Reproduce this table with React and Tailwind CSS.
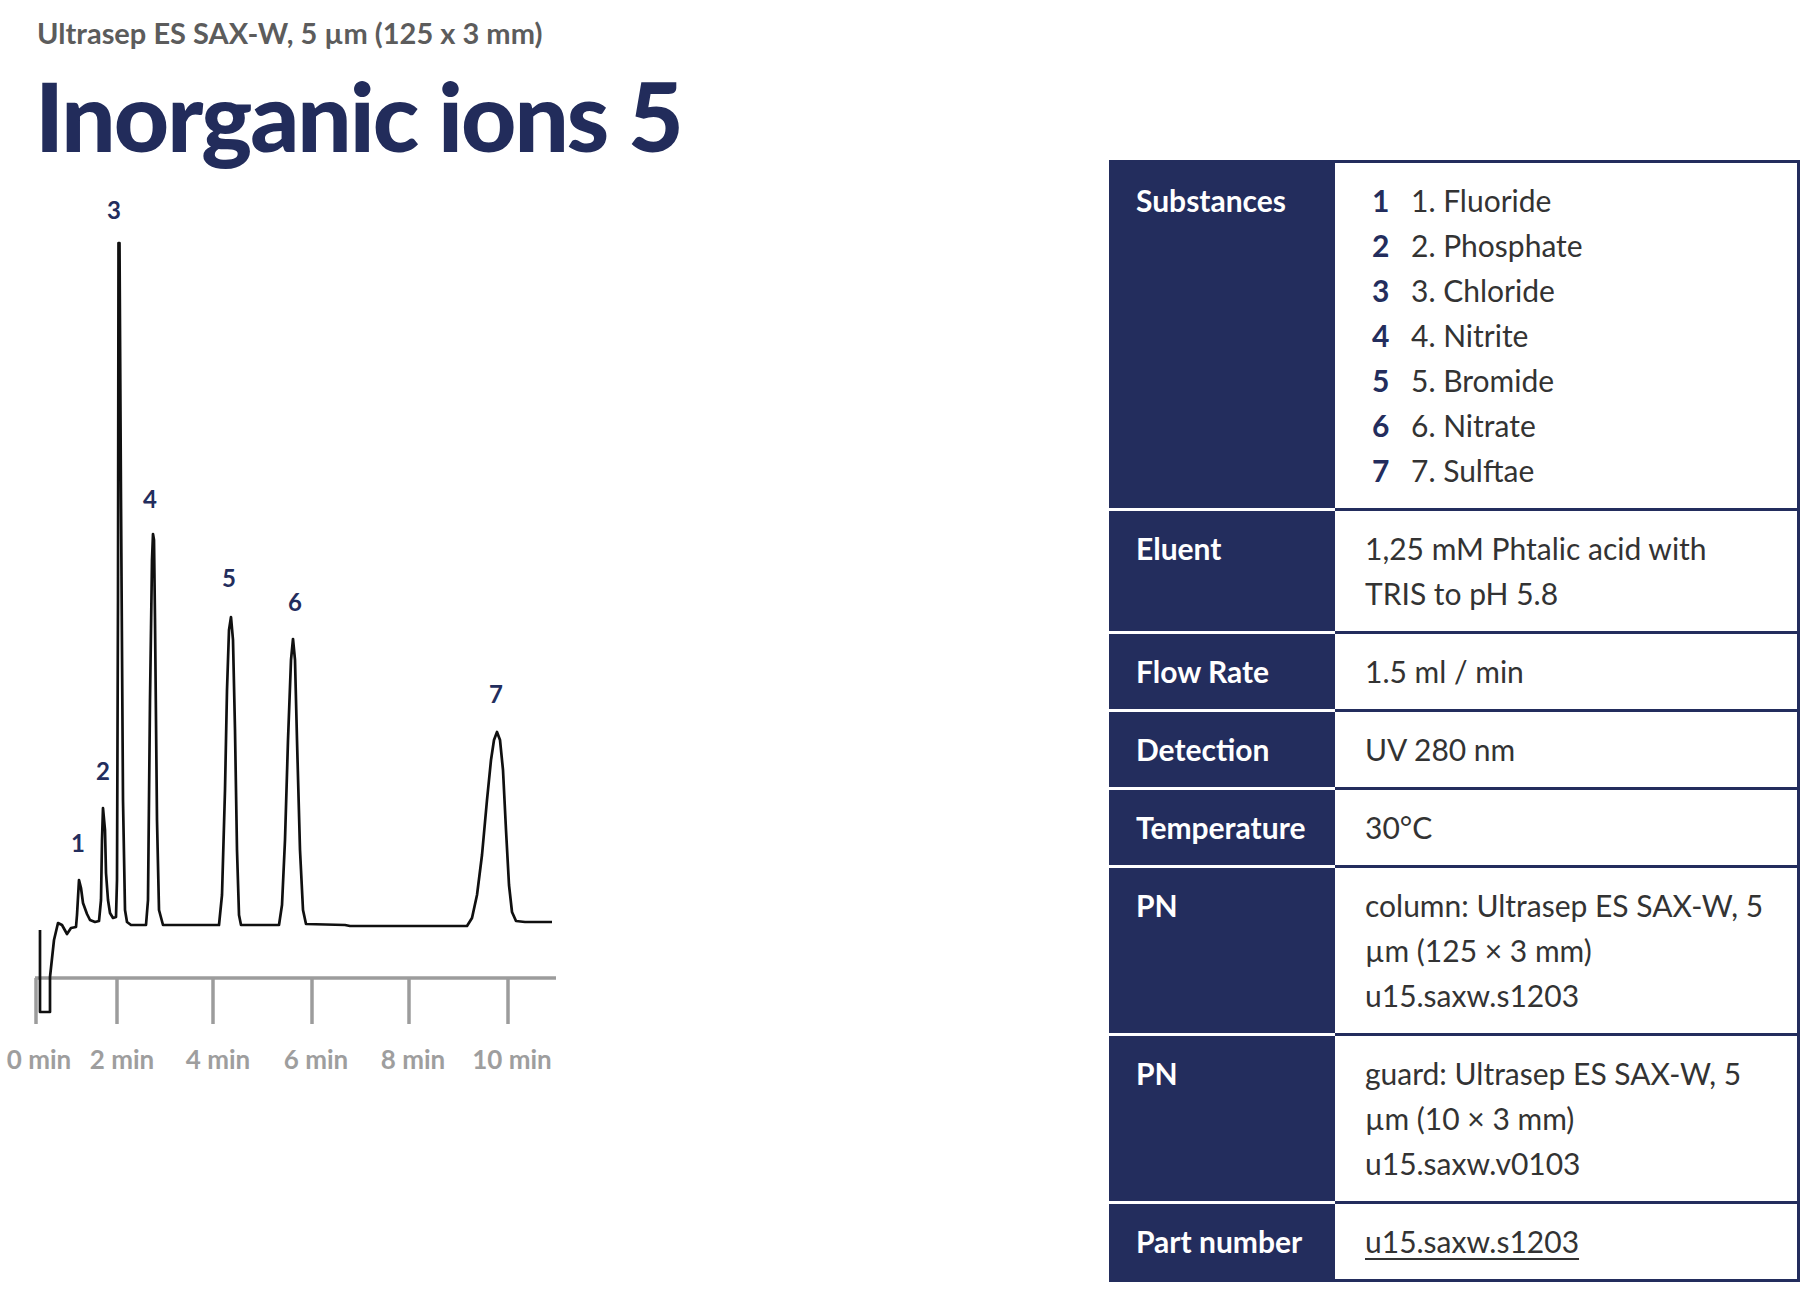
import React from 'react'

const NAVY = '#232d5d'

const substances = [
  'Fluoride',
  'Phosphate',
  'Chloride',
  'Nitrite',
  'Bromide',
  'Nitrate',
  'Sulftae',
]

const rows = [
  { label: 'Eluent', lines: ['1,25 mM Phtalic acid with', 'TRIS to pH 5.8'] },
  { label: 'Flow Rate', lines: ['1.5 ml / min'] },
  { label: 'Detection', lines: ['UV 280 nm'] },
  { label: 'Temperature', lines: ['30°C'] },
  {
    label: 'PN',
    lines: ['column: Ultrasep ES SAX-W, 5', 'µm (125 × 3 mm)', 'u15.saxw.s1203'],
  },
  {
    label: 'PN',
    lines: ['guard: Ultrasep ES SAX-W, 5', 'µm (10 × 3 mm)', 'u15.saxw.v0103'],
  },
]

const trace =
  'M40,930 L40,1012 L50,1012 L50,977 L54,940 L58,923 L62,925 L67,934 L71,928 L76,927 L77,915 L79,880 L81,888 L83,903 L87,914 L90,920 L95,922 L99,921 L101,900 L102,840 L103,808 L105,830 L106,873 L108,900 L110,913 L113,918 L116,917 L117,880 L118,600 L118.5,243 L119.5,243 L121,500 L123,800 L125,910 L127,922 L131,925 L146,925 L148,900 L150,700 L152,560 L153,534 L154,540 L155,620 L157,820 L159,910 L163,925 L219,925 L222,895 L225,790 L227,690 L229,630 L231,617 L233,640 L235,730 L237,850 L239,915 L241,925 L279,925 L282,905 L285,840 L288,740 L291,660 L293,639 L295,660 L297,740 L300,850 L303,910 L306,924 L345,925 L350,926 L467,926 L472,918 L477,895 L482,855 L487,800 L491,760 L494,740 L497,732 L500,740 L503,770 L506,830 L509,885 L512,912 L516,921 L525,922 L552,922'

const ticks = [
  { x: 36, label: '0 min', lx: 39 },
  { x: 117, label: '2 min', lx: 122 },
  { x: 213, label: '4 min', lx: 218 },
  { x: 312, label: '6 min', lx: 316 },
  { x: 409, label: '8 min', lx: 413 },
  { x: 508, label: '10 min', lx: 512 },
]

const peaks = [
  { n: 1, x: 78, y: 852 },
  { n: 2, x: 103, y: 780 },
  { n: 3, x: 114, y: 219 },
  { n: 4, x: 150, y: 508 },
  { n: 5, x: 229, y: 587 },
  { n: 6, x: 295, y: 611 },
  { n: 7, x: 496, y: 703 },
]

function Chromatogram() {
  return (
    <svg width="600" height="910" viewBox="0 180 600 910" className="block">
      <line x1="35" y1="978" x2="556" y2="978" stroke="#9c9c9c" strokeWidth="3.5" />
      {ticks.map((t) => (
        <line key={t.x} x1={t.x} y1="978" x2={t.x} y2="1024" stroke="#9c9c9c" strokeWidth="3.5" />
      ))}
      <path d={trace} fill="none" stroke="#101010" strokeWidth="2.7" strokeLinejoin="round" />
      {peaks.map((p) => (
        <text
          key={p.n}
          x={p.x}
          y={p.y}
          textAnchor="middle"
          fill={NAVY}
          fontSize="24"
          fontWeight="700"
          fontFamily="Lato, sans-serif"
        >
          {p.n}
        </text>
      ))}
      {ticks.map((t) => (
        <text
          key={t.label}
          x={t.lx}
          y="1069"
          textAnchor="middle"
          fill="#9e9e9e"
          fontSize="26"
          fontWeight="700"
          fontFamily="Lato, sans-serif"
        >
          {t.label}
        </text>
      ))}
    </svg>
  )
}

function Row({ label, last, children }) {
  return (
    <div className="grid grid-cols-[226px_1fr]">
      <div
        className={`bg-[#232d5d] pl-[27px] py-[15px] text-white font-bold border-b-[3px] ${
          last ? 'border-[#232d5d]' : 'border-white'
        }`}
      >
        {label}
      </div>
      <div className="pl-[30px] py-[15px] border-b-[3px] border-r-[3px] border-[#232d5d] text-[#333333]">
        {children}
      </div>
    </div>
  )
}

export default function App() {
  return (
    <div className="w-[1802px] h-[1312px] bg-white flex font-['Lato',sans-serif] overflow-hidden">
      <div className="w-[620px] flex flex-col">
        <div className="pt-[13px] pl-[37px] text-[29px] leading-[40px] font-bold text-[#5c5c5c] whitespace-nowrap">
          Ultrasep ES SAX-W, 5 µm (125 x 3 mm)
        </div>
        <h1 className="mt-[14px] pl-[35px] text-[96px] leading-[96px] font-black tracking-[-2px] text-[#222c5b] whitespace-nowrap">
          Inorganic ions 5
        </h1>
        <div className="mt-[17px]">
          <Chromatogram />
        </div>
      </div>

      <div className="ml-auto mr-[2px] mt-[160px] w-[691px] self-start border-t-[3px] border-[#232d5d] text-[30px] leading-[45px]">
        <Row label="Substances">
          {substances.map((s, i) => (
            <div key={s} className="flex">
              <span className="w-[46px] pl-[7px] font-bold text-[#232d5d]">{i + 1}</span>
              <span>
                {i + 1}. {s}
              </span>
            </div>
          ))}
        </Row>
        {rows.map((r, i) => (
          <Row key={i} label={r.label}>
            {r.lines.map((l) => (
              <div key={l} className="whitespace-nowrap">
                {l}
              </div>
            ))}
          </Row>
        ))}
        <Row label="Part number" last>
          <a href="#" className="underline decoration-2 underline-offset-[5px] text-[#333333]">
            u15.saxw.s1203
          </a>
        </Row>
      </div>
    </div>
  )
}
